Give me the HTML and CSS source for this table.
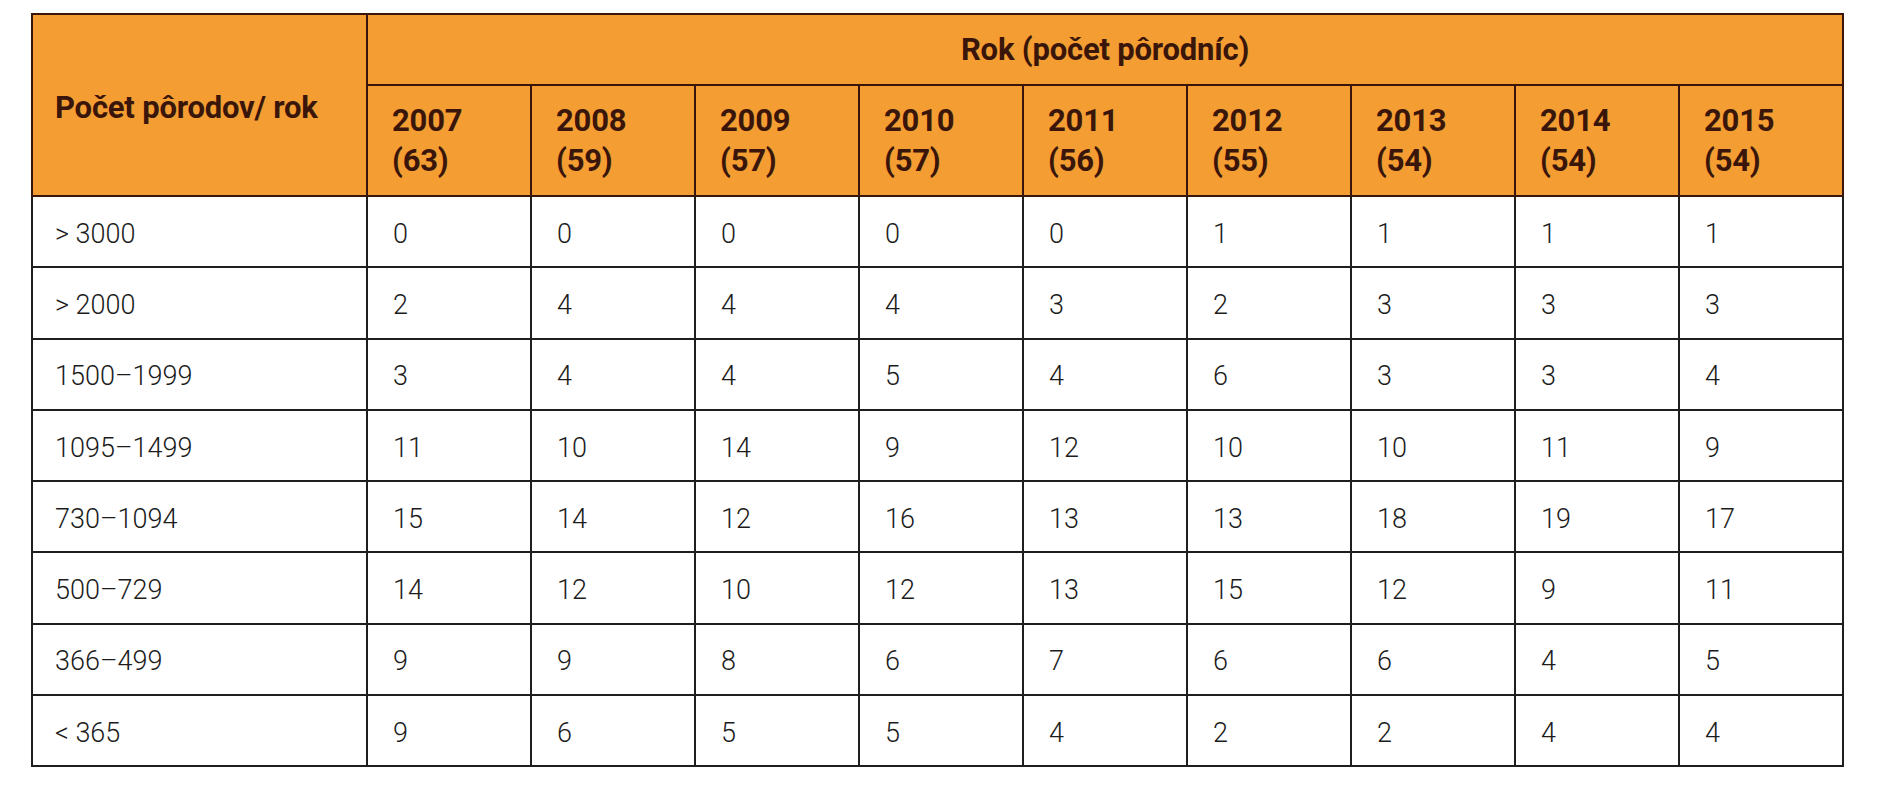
FILE: index.html
```html
<!DOCTYPE html>
<html lang="sk">
<head>
<meta charset="utf-8">
<title>Počet pôrodov</title>
<link rel="stylesheet" href="styles.css">
</head>
<body>
<table class="data">
  <colgroup>
    <col class="c-first">
    <col class="c-year"><col class="c-year"><col class="c-year"><col class="c-year"><col class="c-year">
    <col class="c-year"><col class="c-year"><col class="c-year"><col class="c-year">
  </colgroup>
  <thead>
    <tr class="h1">
      <th rowspan="2" class="corner">Počet pôrodov/ rok</th>
      <th colspan="9" class="span">Rok (počet pôrodníc)</th>
    </tr>
    <tr class="h2">
      <th>2007<br>(63)</th>
      <th>2008<br>(59)</th>
      <th>2009<br>(57)</th>
      <th>2010<br>(57)</th>
      <th>2011<br>(56)</th>
      <th>2012<br>(55)</th>
      <th>2013<br>(54)</th>
      <th>2014<br>(54)</th>
      <th>2015<br>(54)</th>
    </tr>
  </thead>
  <tbody>
    <tr><td>&gt; 3000</td><td>0</td><td>0</td><td>0</td><td>0</td><td>0</td><td>1</td><td>1</td><td>1</td><td>1</td></tr>
    <tr><td>&gt; 2000</td><td>2</td><td>4</td><td>4</td><td>4</td><td>3</td><td>2</td><td>3</td><td>3</td><td>3</td></tr>
    <tr><td>1500–1999</td><td>3</td><td>4</td><td>4</td><td>5</td><td>4</td><td>6</td><td>3</td><td>3</td><td>4</td></tr>
    <tr><td>1095–1499</td><td>11</td><td>10</td><td>14</td><td>9</td><td>12</td><td>10</td><td>10</td><td>11</td><td>9</td></tr>
    <tr><td>730–1094</td><td>15</td><td>14</td><td>12</td><td>16</td><td>13</td><td>13</td><td>18</td><td>19</td><td>17</td></tr>
    <tr><td>500–729</td><td>14</td><td>12</td><td>10</td><td>12</td><td>13</td><td>15</td><td>12</td><td>9</td><td>11</td></tr>
    <tr><td>366–499</td><td>9</td><td>9</td><td>8</td><td>6</td><td>7</td><td>6</td><td>6</td><td>4</td><td>5</td></tr>
    <tr><td>&lt; 365</td><td>9</td><td>6</td><td>5</td><td>5</td><td>4</td><td>2</td><td>2</td><td>4</td><td>4</td></tr>
  </tbody>
</table>
</body>
</html>
```

FILE: styles.css
```css
html, body {
  margin: 0;
  padding: 0;
  background: #ffffff;
}

body {
  padding: 13px 0 0 31px;
  font-family: Roboto, "Liberation Sans", sans-serif;
}

.data {
  border-collapse: collapse;
  table-layout: fixed;
  width: 1812px;
}

.c-first { width: 335px; }
.c-year { width: 164px; }

.data th {
  background: #f49d32;
  color: #3a160a;
  font-weight: 700;
  font-size: 31px;
  line-height: 40px;
  letter-spacing: -0.2px;
  text-align: left;
  border: 2px solid #3a160a;
  padding: 0 0 0 22px;
  vertical-align: middle;
}

.data .h1 th { height: 69px; }
.data .h2 th { height: 109px; padding-left: 24px; }

.data .corner { padding-top: 6px; }

.data .span {
  text-align: center;
  padding-left: 0;
}

.data td {
  border: 2px solid #1e1e1e;
  height: 65.3px;
  padding: 4px 0 0 25px;
  font-size: 27px;
  font-weight: 300;
  color: #1c1c1c;
  vertical-align: middle;
}

.data td:first-child { padding-left: 22px; }
```
